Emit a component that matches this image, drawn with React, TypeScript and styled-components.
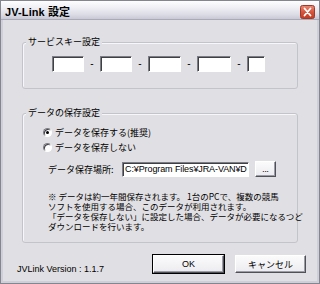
import React from "react";
import styled, { createGlobalStyle } from "styled-components";

const GlobalStyle = createGlobalStyle`
  html, body {
    margin: 0;
    padding: 0;
    background: #ffffff;
  }
  body {
    font-family: "Liberation Sans", "Noto Sans CJK JP", sans-serif;
  }
  * {
    box-sizing: border-box;
  }
`;

const keyWidths = [32, 32, 33, 34, 18];

const notes = [
  "※ データは約一年間保存されます。 1台のPCで、複数の競馬",
  "ソフトを使用する場合、このデータが利用されます。",
  "「データを保存しない」に設定した場合、データが必要になるつど",
  "ダウンロードを行います。",
];

const CloseIcon = () => (
  <svg width="15" height="14" viewBox="0 0 15 14">
    <defs>
      <linearGradient id="closeBg" x1="0" y1="0" x2="0" y2="1">
        <stop offset="0" stopColor="#e98a76" />
        <stop offset="0.5" stopColor="#d7553d" />
        <stop offset="1" stopColor="#c23a22" />
      </linearGradient>
    </defs>
    <rect x="0.5" y="0.5" width="14" height="13" rx="2" fill="url(#closeBg)" stroke="#9c3a2c" />
    <path d="M4.5 3.5 L10.5 10.5 M10.5 3.5 L4.5 10.5" stroke="#ffffff" strokeWidth="1.8" strokeLinecap="round" />
  </svg>
);

export default function App() {
  return (
    <>
      <GlobalStyle />
      <Window>
        <TitleBar>
          <TitleText>JV-Link 設定</TitleText>
          <CloseButton>
            <CloseIcon />
          </CloseButton>
        </TitleBar>
        <Body>
          <Group>
            <Legend>サービスキー設定</Legend>
            <KeyRow>
              {keyWidths.map((w, i) => (
                <React.Fragment key={i}>
                  {i > 0 && <Dash>-</Dash>}
                  <KeyBox $width={w} />
                </React.Fragment>
              ))}
            </KeyRow>
          </Group>
          <Group $spaced>
            <Legend>データの保存設定</Legend>
            <SaveBody>
              <RadioRow>
                <Radio $checked />
                <span>データを保存する(推奨)</span>
              </RadioRow>
              <RadioRow>
                <Radio />
                <span>データを保存しない</span>
              </RadioRow>
              <PathRow>
                <PathLabel>データ保存場所:</PathLabel>
                <PathBox>C:¥Program Files¥JRA-VAN¥D</PathBox>
                <SmallButton>...</SmallButton>
              </PathRow>
              <Notes>
                {notes.map((line) => (
                  <div key={line}>{line}</div>
                ))}
              </Notes>
            </SaveBody>
          </Group>
          <Footer>
            <Version>JVLink Version : 1.1.7</Version>
            <Buttons>
              <PushButton $default>OK</PushButton>
              <PushButton>キャンセル</PushButton>
            </Buttons>
          </Footer>
        </Body>
      </Window>
    </>
  );
}

const Window = styled.div`
  width: 320px;
  height: 284px;
  display: flex;
  flex-direction: column;
  border: 1px solid #85858f;
  background: #e0dfe3;
  color: #000000;
  font-size: 9px;
  overflow: hidden;
`;

const TitleBar = styled.div`
  flex: none;
  height: 19px;
  display: flex;
  align-items: center;
  justify-content: space-between;
  padding: 0 4px 0 4px;
  background: linear-gradient(#fefeff 0%, #f0f0f5 35%, #dcdce6 75%, #c9c9d6 100%);
  border-bottom: 1px solid #a9a9b7;
`;

const TitleText = styled.div`
  padding-top: 2px;
  font-size: 11px;
  font-weight: bold;
  letter-spacing: 0.1px;
`;

const CloseButton = styled.div`
  display: flex;
  margin-top: 3px;
`;

const Body = styled.div`
  flex: 1;
  display: flex;
  flex-direction: column;
  padding: 17px 11px 0 14px;
  border: 2px solid #cfcfd9;
  border-top: none;
`;

const Group = styled.fieldset<{ $spaced?: boolean }>`
  margin: ${(p) => (p.$spaced ? "19px" : "0")} 8px 0 5px;
  padding: 0;
  min-width: 0;
  border: 1px solid #c3c3cc;
  border-radius: 3px;
  box-shadow: inset 1px 1px 0 #f7f7fa;
`;

const Legend = styled.legend`
  margin-left: 3px;
  padding: 0 2px;
  font-family: "Noto Sans CJK JP", sans-serif;
  font-size: 9px;
  line-height: 10px;
  background: #e0dfe3;
`;

const KeyRow = styled.div`
  display: flex;
  align-items: center;
  padding: 9px 0 16px 29px;
`;

const Sunken = styled.div`
  background: #ffffff;
  border: 1px solid;
  border-color: #7c7c84 #ffffff #ffffff #7c7c84;
  box-shadow: inset 1px 1px 0 #3f3f46;
`;

const KeyBox = styled(Sunken)<{ $width: number }>`
  width: ${(p) => p.$width}px;
  height: 16px;
`;

const Dash = styled.span`
  width: 16px;
  text-align: center;
  font-size: 10px;
  line-height: 16px;
`;

const SaveBody = styled.div`
  display: flex;
  flex-direction: column;
  padding: 7px 0 11px 0;
  font-family: "Noto Sans CJK JP", sans-serif;
`;

const RadioRow = styled.div`
  display: flex;
  align-items: center;
  gap: 3px;
  height: 14px;
  padding-left: 20px;
  & + & {
    margin-top: 1px;
  }
`;

const Radio = styled.span<{ $checked?: boolean }>`
  position: relative;
  width: 9px;
  height: 9px;
  border-radius: 50%;
  background: #ffffff;
  border: 1px solid;
  border-color: #7c7c84 #ffffff #ffffff #7c7c84;
  box-shadow: inset 1px 1px 0 #3f3f46;
  &::after {
    content: "";
    display: ${(p) => (p.$checked ? "block" : "none")};
    position: absolute;
    left: 2px;
    top: 2px;
    width: 3px;
    height: 3px;
    border-radius: 50%;
    background: #000000;
  }
`;

const PathRow = styled.div`
  display: flex;
  align-items: center;
  height: 16px;
  margin-top: 7px;
  padding-left: 25px;
`;

const PathLabel = styled.span`
  width: 74px;
`;

const PathBox = styled(Sunken)`
  width: 127px;
  height: 15px;
  padding: 0 1px 0 2px;
  overflow: hidden;
  white-space: nowrap;
  font-family: "Liberation Sans", "Noto Sans CJK JP", sans-serif;
  font-size: 9px;
  line-height: 13px;
  letter-spacing: -0.1px;
`;

const Raised = styled.div`
  display: flex;
  align-items: center;
  justify-content: center;
  background: linear-gradient(#fbfbfc, #ecebef);
  border: 1px solid;
  border-color: #ffffff #505058 #505058 #ffffff;
  box-shadow: inset -1px -1px 0 #9c9ca6;
`;

const SmallButton = styled(Raised)`
  width: 21px;
  height: 16px;
  margin-left: 6px;
  font-size: 8px;
  line-height: 10px;
`;

const Notes = styled.div`
  margin-top: 14px;
  padding-left: 25px;
  font-size: 8.5px;
  line-height: 10px;
  white-space: nowrap;
`;

const Footer = styled.div`
  display: flex;
  align-items: flex-start;
  justify-content: space-between;
  margin-top: 12px;
`;

const Version = styled.div`
  padding-top: 9px;
  font-size: 9px;
`;

const Buttons = styled.div`
  display: flex;
  gap: 11px;
`;

const PushButton = styled(Raised)<{ $default?: boolean }>`
  width: 71px;
  height: 18px;
  font-family: "Liberation Sans", "Noto Sans CJK JP", sans-serif;
  font-size: 9px;
  outline: ${(p) => (p.$default ? "1px solid #000000" : "none")};
  outline-offset: 0;
`;
